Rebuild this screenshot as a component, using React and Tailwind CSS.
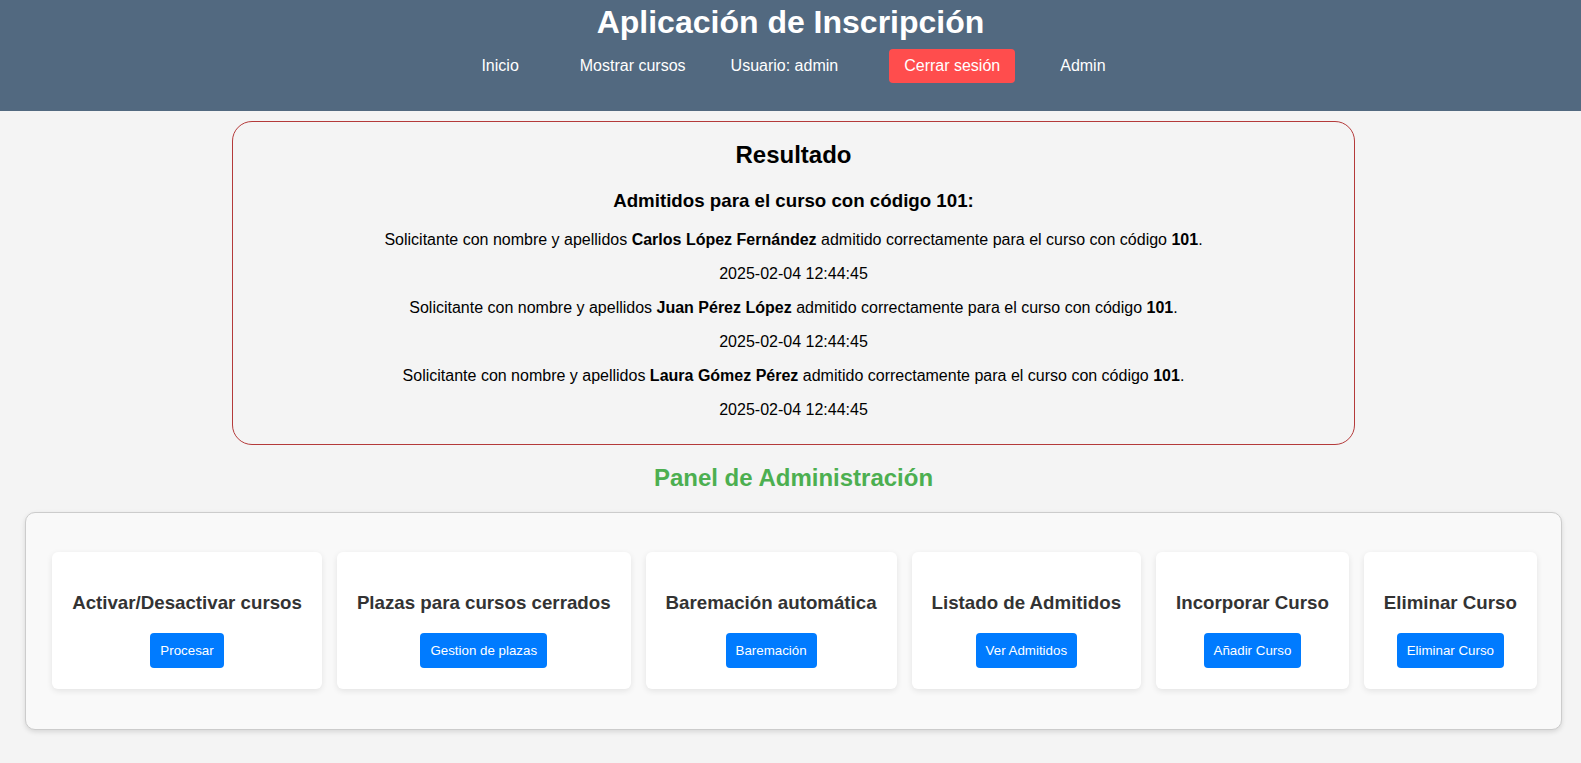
const admitidos = [
  { nombre: 'Carlos López Fernández', fecha: '2025-02-04 12:44:45' },
  { nombre: 'Juan Pérez López', fecha: '2025-02-04 12:44:45' },
  { nombre: 'Laura Gómez Pérez', fecha: '2025-02-04 12:44:45' },
];

const acciones = [
  { titulo: 'Activar/Desactivar cursos', boton: 'Procesar' },
  { titulo: 'Plazas para cursos cerrados', boton: 'Gestion de plazas' },
  { titulo: 'Baremación automática', boton: 'Baremación' },
  { titulo: 'Listado de Admitidos', boton: 'Ver Admitidos' },
  { titulo: 'Incorporar Curso', boton: 'Añadir Curso' },
  { titulo: 'Eliminar Curso', boton: 'Eliminar Curso' },
];

const App = () => {
  return (
    <div className="min-h-screen bg-[#f4f4f4] text-black font-['Liberation_Sans',Arial,sans-serif] pb-[35px]">
      {/* Header */}
      <header className="h-[111px] bg-[#526980] text-white">
        <h1 className="text-[32px] leading-[37px] font-bold text-center pt-[4px]">
          Aplicación de Inscripción
        </h1>
        <nav className="flex items-center justify-center mt-[8px] text-[16px] leading-[18px] pl-[6px]">
          <a className="text-white">Inicio</a>
          <a className="text-white ml-[61px]">Mostrar cursos</a>
          <span className="ml-[45px]">Usuario: admin</span>
          <a className="ml-[51px] bg-[#ff4d4d] rounded-[4px] px-[15px] py-[8px] whitespace-nowrap text-center">
            Cerrar sesión
          </a>
          <a className="text-white ml-[45px]">Admin</a>
        </nav>
      </header>

      {/* Resultado */}
      <section className="ml-[232px] w-[1123px] mt-[10px] border border-[#b43a3a] rounded-[20px] text-center pb-[25px]">
        <h2 className="text-[24px] leading-[28px] font-bold mt-[19px]">Resultado</h2>
        <h3 className="text-[18.72px] leading-[22px] font-bold mt-[21px]">
          Admitidos para el curso con código 101:
        </h3>
        <div className="mt-[19px] flex flex-col gap-[16px] text-[16px] leading-[18px]">
          {admitidos.map((a) => (
            <div key={a.nombre} className="flex flex-col gap-[16px]">
              <p>
                Solicitante con nombre y apellidos <strong>{a.nombre}</strong> admitido
                correctamente para el curso con código <strong>101</strong>.
              </p>
              <p>{a.fecha}</p>
            </div>
          ))}
        </div>
      </section>

      {/* Panel de Administración */}
      <h2 className="text-[24px] leading-[28px] font-bold text-center text-[#4caf50] mt-[19px] pl-[6px]">
        Panel de Administración
      </h2>
      <div className="ml-[25px] w-[1537px] mt-[20px] bg-[#f9f9f9] border border-[#cccccc] rounded-[10px] shadow-[0_2px_5px_rgba(0,0,0,0.12)] pt-[39px] pb-[40px]">
        <div className="flex justify-center gap-[15px] pl-[2px]">
          {acciones.map((a) => (
            <div
              key={a.titulo}
              className="bg-white rounded-[6px] shadow-[0_2px_6px_rgba(0,0,0,0.09)] px-5 pt-5 pb-[21px] flex flex-col items-center"
            >
              <h3 className="text-[18.72px] leading-[22px] font-bold text-[#333333] mt-[20px] mb-[19px] whitespace-nowrap">
                {a.titulo}
              </h3>
              <button className="bg-[#007bff] text-white text-[13.33px] leading-[15px] px-[10px] py-[10px] rounded-[4px]">
                {a.boton}
              </button>
            </div>
          ))}
        </div>
      </div>
    </div>
  );
};

export default App;
